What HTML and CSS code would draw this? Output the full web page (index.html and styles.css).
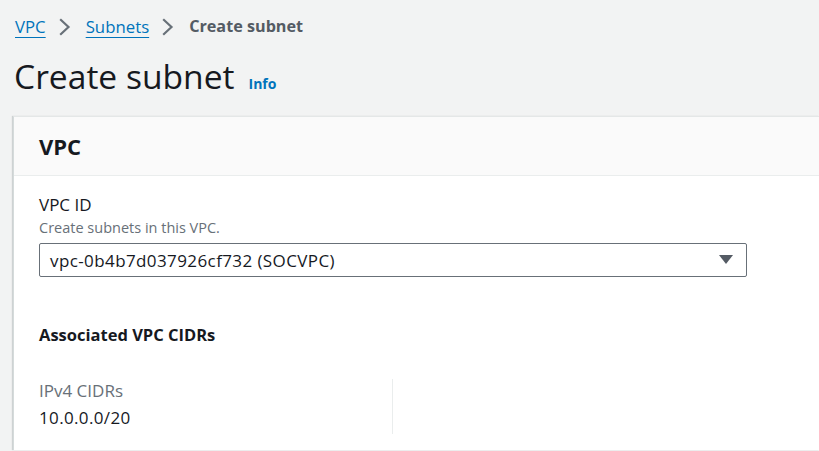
FILE: index.html
```html
<!DOCTYPE html>
<html>
<head>
<meta charset="utf-8">
<link rel="stylesheet" href="styles.css">
</head>
<body>
<nav class="crumbs">
  <a class="crumb-link" href="#">VPC</a>
  <svg class="chev" width="12" height="18" viewBox="0 0 12 18"><path d="M2 2 L9.5 9 L2 16" fill="none" stroke="#687078" stroke-width="2.2" stroke-linecap="square"/></svg>
  <a class="crumb-link" href="#">Subnets</a>
  <svg class="chev" width="12" height="18" viewBox="0 0 12 18"><path d="M2 2 L9.5 9 L2 16" fill="none" stroke="#687078" stroke-width="2.2" stroke-linecap="square"/></svg>
  <span class="crumb-current">Create subnet</span>
</nav>
<header class="page-head">
  <h1 class="title">Create subnet</h1>
  <a class="info" href="#">Info</a>
</header>
<section class="panel">
  <div class="panel-head"><h2>VPC</h2></div>
  <div class="panel-body">
    <div class="field">
      <div class="label">VPC ID</div>
      <div class="desc">Create subnets in this VPC.</div>
      <div class="select">
        <span>vpc-0b4b7d037926cf732 (SOCVPC)</span>
        <svg class="caret" width="14" height="10" viewBox="0 0 14 10"><path d="M0 0 H14 L7 9 Z" fill="#545b64"/></svg>
      </div>
    </div>
    <h3 class="sub">Associated VPC CIDRs</h3>
    <div class="cols">
      <div class="col">
        <div class="k">IPv4 CIDRs</div>
        <div class="v">10.0.0.0/20</div>
      </div>
      <div class="col"></div>
    </div>
  </div>
</section>
</body>
</html>
```
FILE: styles.css
```css
html, body { margin: 0; padding: 0; }
body {
  background: #f2f3f3;
  font-family: "Open Sans", "Noto Sans", sans-serif;
  color: #16191f;
  width: 819px;
  height: 451px;
  overflow: hidden;
}
.crumbs {
  display: flex;
  align-items: center;
  padding: 13px 0 0 15px;
  height: 26px;
  font-size: 16px;
}
.crumb-link {
  color: #0073bb;
  font-size: 16.8px;
  text-decoration: underline;
  text-underline-offset: 4px;
  text-decoration-thickness: 1px;
}
.chev { display: block; margin: 1px 15px 0 13px; }
.crumb-current { color: #545b64; font-weight: 700; font-size: 16.2px; }
.page-head {
  display: flex;
  align-items: baseline;
  gap: 14px;
  padding: 14px 0 0 14px;
  height: 62px;
  box-sizing: border-box;
}
.title {
  margin: 0;
  font-size: 33.6px;
  font-weight: 400;
  line-height: 46px;
}
.info {
  color: #0073bb;
  font-size: 14px;
  font-weight: 700;
  text-decoration: none;
}
.panel {
  margin: 15px 0 0 13px;
  background: #fff;
  border-top: 1px solid #e4e7e7;
  border-left: 1px solid #d5dbdb;
  box-shadow: -1px 0 1px rgba(0,28,36,0.15);
  min-height: 334px;
  box-sizing: border-box;
}
.panel-head {
  background: #fafafa;
  border-bottom: 1px solid #eaeded;
  height: 58px;
  display: flex;
  align-items: center;
  padding-left: 25px;
}
.panel-head h2 {
  margin: 0;
  font-size: 22px;
  font-weight: 700;
}
.panel-body { padding: 17px 0 0 25px; }
.label { font-size: 17px; line-height: 24px; }
.desc { font-size: 14.5px; color: #687078; line-height: 20px; margin-top: 1px; }
.select {
  margin-top: 5px;
  width: 683px;
  height: 32px;
  border: 1px solid #687078;
  border-radius: 2px;
  display: flex;
  align-items: center;
  justify-content: space-between;
  padding: 0 13px 0 10px;
  box-sizing: content-box;
  font-size: 17px;
  letter-spacing: 0.4px;
}
.caret { display: block; }
.sub {
  margin: 46px 0 0;
  font-size: 16.5px;
  font-weight: 700;
  line-height: 24px;
}
.cols {
  display: grid;
  grid-template-columns: 354px 1fr;
  margin-top: 32px;
}
.col:first-child { border-right: 1px solid #eaeded; min-height: 55px; }
.k { color: #687078; font-size: 17px; line-height: 24px; }
.v { font-size: 17px; line-height: 24px; margin-top: 3px; letter-spacing: 0.35px; }
```
